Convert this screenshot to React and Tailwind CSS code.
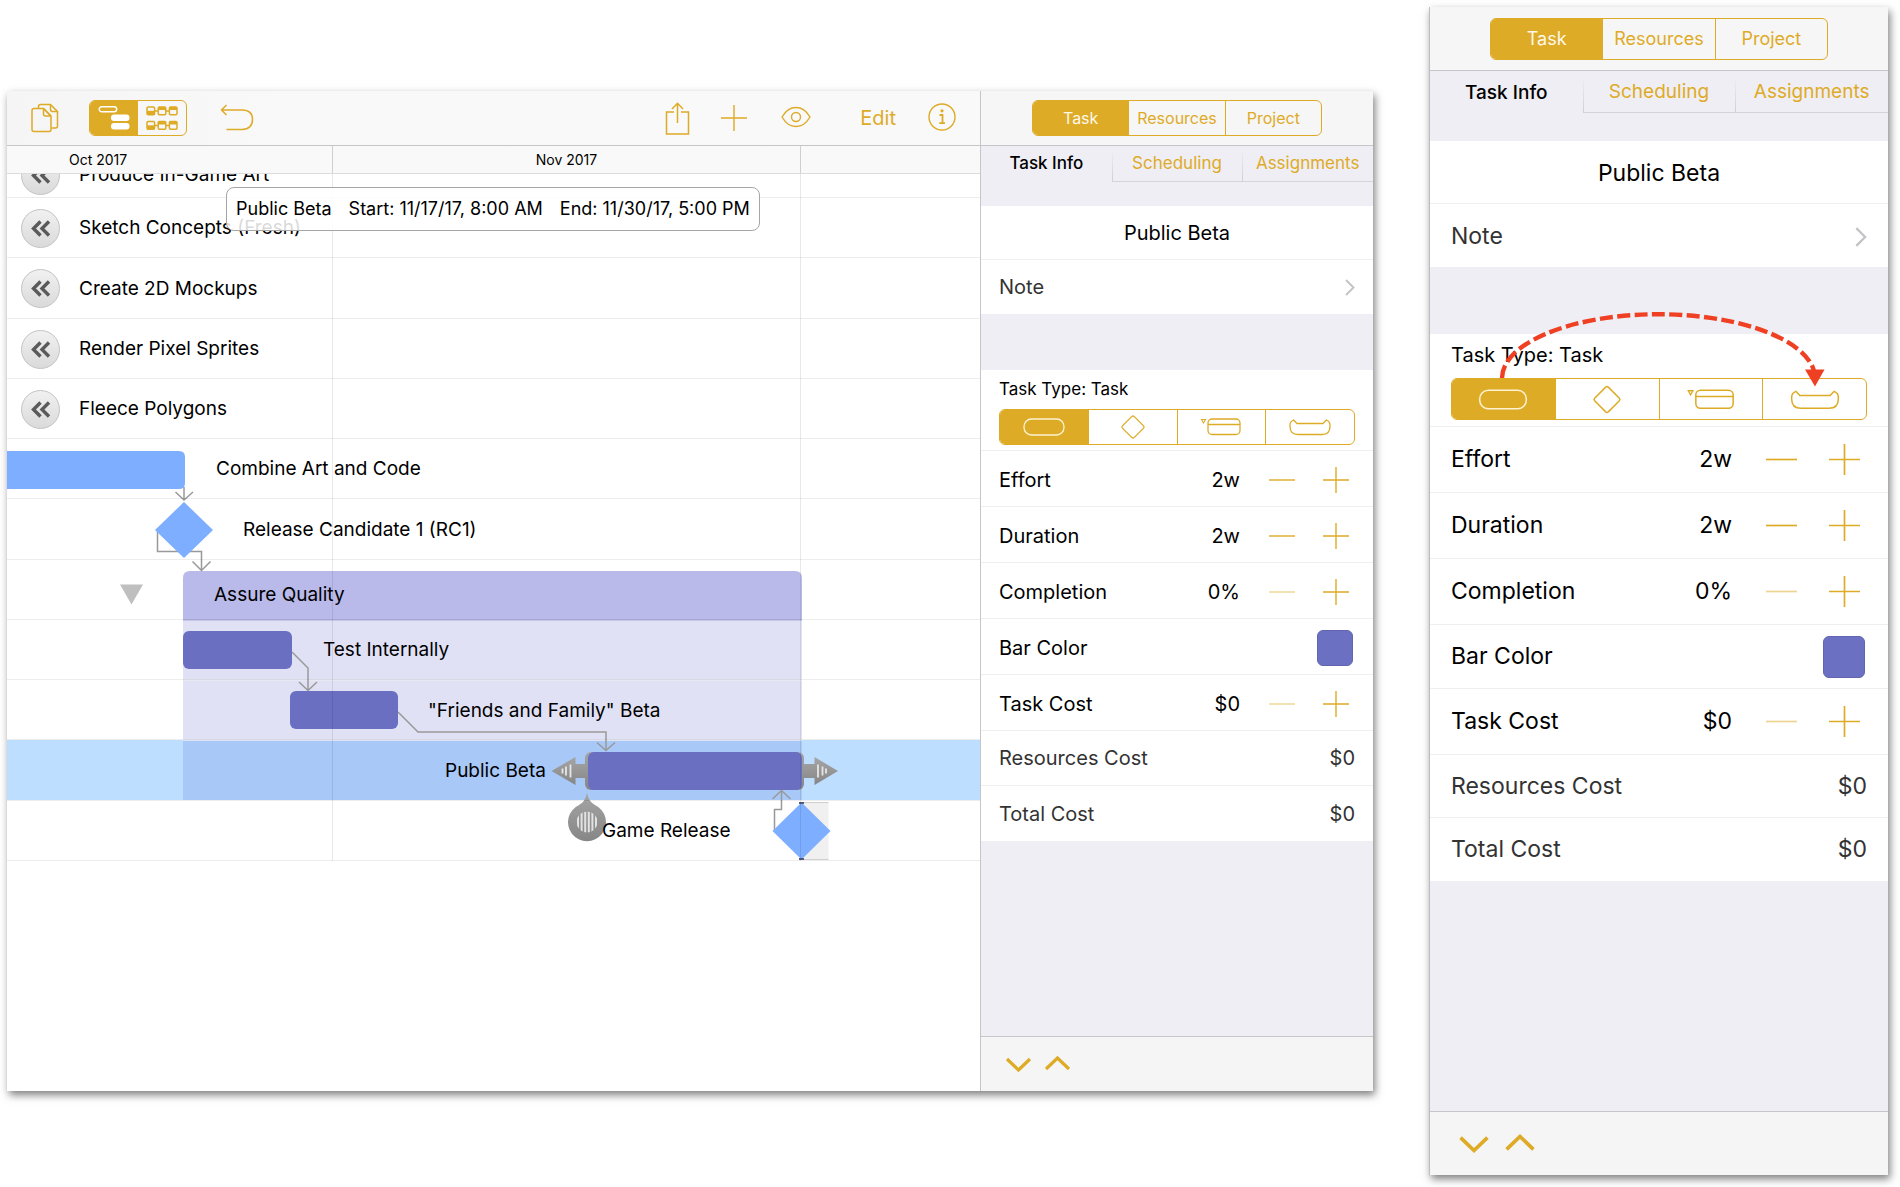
import React, { useId } from "react";

const GOLD = "#deab27";

const SMALL = {
  header: "h-[55px]",
  headerSeg: "w-[290px] h-[36px] text-base",
  tabs: "h-[36px] text-[17px]",
  tabGap: "h-[24px]",
  name: "h-[54px] text-xl",
  note: "h-[54px] pl-[18px] pr-[18px] text-xl",
  noteChevron: "w-[10px] h-[17px]",
  gap: "h-[56px]",
  type: "pt-[9px] pb-[5px] px-[18px]",
  typeLabel: "text-[17px] leading-5",
  typeSeg: "mt-[10px] h-[36px]",
  typeIcon: "w-[60px] h-[30px]",
  row: "h-[56px] pt-0.5 pl-[18px] pr-[24px] text-xl",
  value: "w-[90px] mr-[29px]",
  step: "w-[26px] h-[26px]",
  steps: "gap-[28px]",
  colorRow: "h-[56px] pt-0.5 pl-[18px] pr-[20px] text-xl",
  swatch: "size-[36px]",
  costRow: "h-[55px] pl-[18px] pr-[18px] text-xl",
  footer: "h-[55px] pl-[24px] gap-[12px]",
  chevron: "w-[27px] h-[18px]",
};

const LARGE = {
  header: "h-[64px]",
  headerSeg: "w-[338px] h-[42px] text-lg",
  tabs: "h-[42px] pt-0.5 text-[19px]",
  tabGap: "h-[28px]",
  name: "h-[63px] pt-0.5 text-[23px]",
  note: "h-[63px] pt-0.5 pl-[21px] pr-[21px] text-[23px]",
  noteChevron: "w-[12px] h-[20px]",
  gap: "h-[67px]",
  type: "pt-[9px] pb-[6px] px-[21px]",
  typeLabel: "text-xl leading-6",
  typeSeg: "mt-[11px] h-[42px]",
  typeIcon: "w-[70px] h-[35px]",
  row: "h-[66px] pl-[21px] pr-[28px] text-[23px]",
  value: "w-[100px] mr-[34px]",
  step: "w-[31px] h-[31px]",
  steps: "gap-[32px]",
  colorRow: "h-[64px] pl-[21px] pr-[23px] text-[23px]",
  swatch: "size-[42px]",
  costRow: "h-[63px] pl-[21px] pr-[21px] text-[23px]",
  footer: "h-[64px] pl-[28px] gap-[14px]",
  chevron: "w-[32px] h-[21px]",
};

function StepIcon({ plus, className }) {
  return (
    <svg viewBox="0 0 26 26" className={className} fill="none" stroke={GOLD} strokeWidth="1.4" aria-hidden="true">
      <path d={plus ? "M0 13H26M13 0V26" : "M0 13H26"} />
    </svg>
  );
}

function TypeIcon({ kind, className }) {
  const paths = {
    task: <rect x="10" y="7" width="40" height="16" rx="7.5" />,
    milestone: <path d="M28.9 4.4 L19.4 13.9 Q18.4 15 19.4 16.1 L28.9 25.6 Q30 26.6 31.1 25.6 L40.6 16.1 Q41.6 15 40.6 13.9 L31.1 4.4 Q30 3.4 28.9 4.4Z" />,
    group: (
      <>
        <rect x="17" y="7" width="32" height="15.5" rx="4" />
        <path d="M17 12.5H49" />
        <path d="M10.5 7.5H14.5L12.5 11Z" strokeWidth="1.1" />
      </>
    ),
    hammock: <path d="M10 13 Q10 9.5 13.6 8 L17 11.5 H43 L46.4 8 Q50 9.5 50 13 V14.5 Q50 22.5 42 22.5 H18 Q10 22.5 10 14.5Z" strokeLinejoin="round" />,
  };
  return (
    <svg viewBox="0 0 60 30" className={className} fill="none" stroke="currentColor" strokeWidth="1.3" aria-hidden="true">
      {paths[kind]}
    </svg>
  );
}

function StepRow({ s, label, value, minusOff }) {
  const id = useId();
  return (
    <div className={"flex items-center border-b border-[#efeff1] " + s.row}>
      <label htmlFor={id} className="flex-1 text-black">{label}</label>
      <input id={id} defaultValue={value} className={"bg-transparent text-right text-black outline-none " + s.value} />
      <div className={"flex items-center " + s.steps}>
        <button type="button" disabled={minusOff} aria-label={"Decrease " + label} className="disabled:opacity-50">
          <StepIcon className={s.step} />
        </button>
        <button type="button" aria-label={"Increase " + label}>
          <StepIcon plus className={s.step} />
        </button>
      </div>
    </div>
  );
}

function Inspector({ s, children }) {
  const seg = "flex-1 border-l border-[#deab27] first:border-l-0";
  const tab =
    "relative border-b border-[#d3d3d8] text-[#deab27] before:absolute before:left-0 before:top-1 before:bottom-0 before:w-px before:bg-gradient-to-b before:from-transparent before:to-[#cfcfd4]";
  return (
    <div className="flex h-full flex-col bg-[#efeef4]">
      <div className={"flex items-center justify-center border-b border-[#c6c6ca] bg-[#f6f6f6] " + s.header}>
        <div className={"flex overflow-hidden rounded-md border border-[#deab27] text-[#deab27] " + s.headerSeg}>
          <button type="button" aria-pressed="true" className={seg + " bg-[#deab27] text-[#fdf8ea]"}>Task</button>
          <button type="button" className={seg}>Resources</button>
          <button type="button" className={seg}>Project</button>
        </div>
      </div>
      <div role="tablist" className={"grid grid-cols-3 " + s.tabs}>
        <button type="button" role="tab" aria-selected="true" className="font-medium text-black">Task Info</button>
        <button type="button" role="tab" aria-selected="false" className={tab}>Scheduling</button>
        <button type="button" role="tab" aria-selected="false" className={tab}>Assignments</button>
      </div>
      <div className={s.tabGap} />
      <div className="bg-white">
        <input aria-label="Task name" defaultValue="Public Beta" className={"block w-full border-b border-[#efeff1] bg-transparent text-center text-black outline-none " + s.name} />
        <button type="button" className={"flex w-full items-center justify-between text-[#333] " + s.note}>
          Note
          <svg viewBox="0 0 10 17" className={s.noteChevron} fill="none" stroke="#c4c4c8" strokeWidth="2" aria-hidden="true">
            <path d="M1 1L8.500 8.500L1 16" />
          </svg>
        </button>
      </div>
      <div className={s.gap} />
      <div className="bg-white">
        <div className={"relative border-b border-[#efeff1] " + s.type}>
          <div className={"text-black " + s.typeLabel}>Task Type: Task</div>
          <div className={"flex overflow-hidden rounded-md border border-[#deab27] text-[#deab27] " + s.typeSeg}>
            {["task", "milestone", "group", "hammock"].map((kind, i) => (
              <button
                key={kind}
                type="button"
                aria-label={kind}
                aria-pressed={i === 0}
                className={"flex items-center justify-center aria-pressed:bg-[#deab27] aria-pressed:text-[#fdf3d4] " + seg}
              >
                <TypeIcon kind={kind} className={s.typeIcon} />
              </button>
            ))}
          </div>
          {children}
        </div>
        <StepRow s={s} label="Effort" value="2w" />
        <StepRow s={s} label="Duration" value="2w" />
        <StepRow s={s} label="Completion" value="0%" minusOff />
        <div className={"flex items-center justify-between border-b border-[#efeff1] text-black " + s.colorRow}>
          Bar Color
          <button type="button" aria-label="Bar color" className={"rounded-md border border-[#6165ad] bg-[#6c70c2] " + s.swatch} />
        </div>
        <StepRow s={s} label="Task Cost" value="$0" minusOff />
        <div className={"flex items-center justify-between border-b border-[#efeff1] text-[#333] " + s.costRow}>
          <span>Resources Cost</span>
          <span>$0</span>
        </div>
        <div className={"flex items-center justify-between text-[#333] " + s.costRow}>
          <span>Total Cost</span>
          <span>$0</span>
        </div>
      </div>
      <div className="flex-1" />
      <div className={"flex items-center border-t border-[#c6c6ca] bg-[#f5f5f5] " + s.footer}>
        <button type="button" aria-label="Next task">
          <svg viewBox="0 0 27 18" className={s.chevron} fill="none" stroke={GOLD} strokeWidth="3.2" aria-hidden="true">
            <path d="M2 4L13.500 15L25 4" />
          </svg>
        </button>
        <button type="button" aria-label="Previous task">
          <svg viewBox="0 0 27 18" className={s.chevron} fill="none" stroke={GOLD} strokeWidth="3.2" aria-hidden="true">
            <path d="M2 14L13.500 3L25 14" />
          </svg>
        </button>
      </div>
    </div>
  );
}

function Toolbar() {
  return (
    <div className="flex h-[55px] items-center border-b border-[#c6c6ca] bg-gradient-to-r from-[#f5f5f5] to-[#f9f9f9] to-30% pr-[24px] pl-[24px]">
      <button type="button" aria-label="Documents">
        <svg viewBox="0 0 28 30" className="h-[30px] w-[28px]" fill="none" stroke={GOLD} strokeWidth="1.5" strokeLinejoin="round" aria-hidden="true">
          <path d="M7.500 5V3.500Q7.500 1.500 9.500 1.500H19.500L26.500 8.500V23Q26.500 25 24.500 25H20.500" />
          <path d="M19.500 1.500V6.500Q19.500 8.500 21.500 8.500H26.500" />
          <path d="M3 5.500H12.500L20 13V26.500Q20 28.500 18 28.500H3Q1 28.500 1 26.500V7.500Q1 5.500 3 5.500Z" />
          <path d="M12.500 5.500V11Q12.500 13 14.500 13H20M12.500 5.500L20 13" />
        </svg>
      </button>
      <div className="ml-[30px] flex h-[36px] w-[98px] overflow-hidden rounded-md border border-[#deab27]">
        <button type="button" aria-label="Gantt view" aria-pressed="true" className="flex flex-1 items-center justify-center bg-[#deab27]">
          <svg viewBox="0 0 32 26" className="h-[26px] w-[32px]" aria-hidden="true">
            <rect x="1.200" y="1.700" width="17.500" height="5" rx="2.500" fill="none" stroke="#fff" strokeWidth="1.400" />
            <rect x="13" y="9.500" width="18.500" height="6.500" rx="3" fill="#fff" />
            <rect x="13" y="18" width="18.500" height="6.500" rx="3" fill="#fff" />
          </svg>
        </button>
        <button type="button" aria-label="Network view" className="flex flex-1 items-center justify-center">
          <svg viewBox="0 0 32 26" className="h-[26px] w-[32px]" fill="none" stroke={GOLD} aria-hidden="true">
            {[2, 16.5].map((y) => (
              <g key={y}>
                <path d={`M8 ${y + 4}H24`} strokeWidth="1.500" />
                {[1, 12.2, 23.4].map((x, i) => (
                  <g key={x}>
                    <rect x={x} y={y} width="7.600" height="7.800" rx="1.200" strokeWidth="1.500" fill="#f7f7f7" />
                    <rect x={x} y={i === 0 ? y + 3.8 : y} width="7.600" height={i === 0 ? 4 : 3} fill={GOLD} stroke="none" />
                  </g>
                ))}
              </g>
            ))}
          </svg>
        </button>
      </div>
      <button type="button" aria-label="Undo" className="ml-[33px]">
        <svg viewBox="0 0 34 28" className="h-[28px] w-[34px]" fill="none" stroke={GOLD} strokeWidth="1.500" aria-hidden="true">
          <path d="M6.500 1L1.500 6L6.500 11M1.500 6H22Q32.500 6 32.500 15.500T22 25.500H6.500" />
        </svg>
      </button>
      <div className="flex-1" />
      <button type="button" aria-label="Share">
        <svg viewBox="0 0 25 34" className="h-[34px] w-[25px]" fill="none" stroke={GOLD} strokeWidth="1.500" aria-hidden="true">
          <path d="M9 11H1.500V33H23.500V11H16M12.500 22V2.500M7 8L12.500 2.300L18 8" />
        </svg>
      </button>
      <button type="button" aria-label="Add" className="ml-[31px]">
        <StepIcon plus className="size-[26px]" />
      </button>
      <button type="button" aria-label="View options" className="ml-[34px]">
        <svg viewBox="0 0 30 22" className="mb-[2px] h-[22px] w-[30px]" fill="none" stroke={GOLD} strokeWidth="1.400" aria-hidden="true">
          <path d="M1 11Q6.500 1.500 15 1.500T29 11Q23.500 20.500 15 20.500T1 11Z" />
          <circle cx="15" cy="11" r="4.500" />
        </svg>
      </button>
      <button type="button" className="ml-[49px] text-xl text-[#deab27]">Edit</button>
      <button type="button" aria-label="Info" className="ml-[32px]">
        <svg viewBox="0 0 28 28" className="mb-[2px] size-[28px]" fill="none" stroke={GOLD} strokeWidth="1.400" aria-hidden="true">
          <circle cx="14" cy="14" r="13" />
          <circle cx="14" cy="7.800" r="1.600" fill={GOLD} stroke="none" />
          <path d="M11.500 12H14.500V20M11.300 20.200H17" strokeWidth="1.800" />
        </svg>
      </button>
    </div>
  );
}

function OffscreenTask({ children }) {
  return (
    <div className="flex items-center pt-0.5">
      <button
        type="button"
        aria-label={"Scroll to " + children}
        className="ml-[14px] flex size-[39px] shrink-0 items-center justify-center rounded-full border border-[#c3c3c3] bg-gradient-to-b from-[#f1f1f1] to-[#dadada]"
      >
        <svg viewBox="0 0 20 17" className="h-[17px] w-[20px]" fill="none" stroke="#5a5a5a" strokeWidth="3.400" aria-hidden="true">
          <path d="M9.500 1.500L2.500 8.500L9.500 15.500M18 1.500L11 8.500L18 15.500" />
        </svg>
      </button>
      <span className="ml-[19px]">{children}</span>
    </div>
  );
}

function Chart() {
  return (
    <svg className="absolute inset-0 h-full w-full" aria-hidden="true">
      <defs>
        <linearGradient id="handle" x1="0" y1="0" x2="0" y2="1">
          <stop offset="0" stopColor="#a5a5a5" />
          <stop offset="1" stopColor="#868686" />
        </linearGradient>
        <clipPath id="grip"><circle cx="580" cy="648" r="10.500" /></clipPath>
      </defs>
      <rect y="566" width="100%" height="60" fill="#bddefe" />
      <path d="M176 446V404Q176 397 183 397H788Q795 397 795 404V446Z" fill="#b9baea" />
      <rect x="176" y="446" width="619" height="120" fill="#e1e1f5" />
      <rect x="176" y="566" width="619" height="60" fill="#a8c8f7" />
      <path d="M176 506H795M176 566H795" stroke="#ececf3" strokeWidth="1.500" />
      <path d="M176 446H795" stroke="#acadda" />
      <path d="M113 410.500H136L124.500 430.500Z" fill="#bfbfbf" />
      <rect x="794" y="628" width="27.500" height="58" fill="#f0f0f0" />
      <path d="M794 628.500H821.500M794 685.500H821.500" stroke="#cfcfcf" />

      <g fill="none" stroke="#999" strokeWidth="1.500">
        <path d="M177 313V326M168.500 318L177 326L186 318" />
        <path d="M150.500 357V377.500H194.500V397M185.500 387.500L194.500 396.500L203.500 387.500" />
        <path d="M285 478L301 494V517M292 508L301 516.500L310 508" />
        <path d="M391 538L411 558H599V577M590 568.500L599 576.500L608 568.500" />
        <path d="M767.500 656V635.500H774.500V617M765.500 625L774.500 616.500L783.500 625" />
      </g>

      <path d="M0 277H172Q178 277 178 283V309Q178 315 172 315H0Z" fill="#7daeff" />
      <path d="M177 328L206 356L177 384L148 356Z" fill="#7daeff" />
      <path d="M794.500 628.500L823.500 657L794.500 685.500L765.500 657Z" fill="#7daeff" />
      <path d="M792 629H797M792 685H797" stroke="#4f5c80" strokeWidth="2" />
      <rect x="176" y="457" width="109" height="38" rx="6" fill="#6b6fc2" />
      <rect x="283" y="517" width="108" height="38" rx="6" fill="#6b6fc2" />

      <g fill="url(#handle)">
        <rect x="578" y="578" width="219" height="38" rx="6" />
        <path d="M544.500 597L568.500 583V590H579V604H568.500V611Z" />
        <path d="M831 597L807.500 583V590H796V604H807.500V611Z" />
        <path d="M580 619Q582 628 588 631A19 19 0 1 1 572 631Q578 628 580 619Z" />
      </g>
      <rect x="581" y="578" width="214" height="38" rx="6" fill="#6b6fc2" />
      <path d="M555.500 594.500V599.500M559 592.500V601.500M563.500 590.500V603.500M811 590.500V603.500M815.500 592.500V601.500M819 594.500V599.500" stroke="#e6e6e6" strokeWidth="1.800" />
      <g clipPath="url(#grip)">
        <path d="M571 637V659M574.600 637V659M578.200 637V659M581.800 637V659M585.400 637V659M589 637V659" stroke="#e2e2e2" strokeWidth="2" />
      </g>
      <path d="M325.500 0V687M793.500 0V687" stroke="#000" strokeOpacity="0.09" />
    </svg>
  );
}

function Gantt() {
  return (
    <div className="min-w-0 flex-1 bg-white">
      <Toolbar />
      <div className="flex h-[28px] border-b border-[#dcdcdc] bg-[#f9f9f9] text-sm text-black">
        <div className="flex w-[326px] items-center border-r border-[#cfcfcf] pl-[62px]">Oct 2017</div>
        <div className="flex w-[468px] items-center justify-center border-r border-[#cfcfcf]">Nov 2017</div>
      </div>
      <div className="relative">
        <Chart />
        <div className="relative grid h-[687px] grid-rows-[24px_repeat(11,1fr)] text-[19px] text-black *:border-b *:border-black/7">
          <div className="flex items-end overflow-hidden">
            <div className="mb-[2px]">
              <OffscreenTask>Produce In-Game Art</OffscreenTask>
            </div>
          </div>
          <OffscreenTask>Sketch Concepts (Fresh)</OffscreenTask>
          <OffscreenTask>Create 2D Mockups</OffscreenTask>
          <OffscreenTask>Render Pixel Sprites</OffscreenTask>
          <OffscreenTask>Fleece Polygons</OffscreenTask>
          <div className="flex items-center pt-0.5 pl-[209px]">Combine Art and Code</div>
          <div className="flex items-center pt-0.5 pl-[236px]">Release Candidate 1 (RC1)</div>
          <div className="flex items-center pt-3 pl-[207px]">Assure Quality</div>
          <div className="flex items-center pt-0.5 pl-[316px]">Test Internally</div>
          <div className="flex items-center pt-0.5 pl-[421px]">"Friends and Family" Beta</div>
          <div className="flex items-center pt-0.5 pl-[438px]">Public Beta</div>
          <div className="flex items-center pt-0.5 pl-[595px]">Game Release</div>
        </div>
        <div role="tooltip" className="absolute top-[13px] left-[219px] flex h-[44px] items-center gap-[17px] rounded-lg border border-[#a6a6a6] bg-white/85 px-[9px] text-lg whitespace-nowrap text-black">
          <span>Public Beta</span>
          <span>Start: 11/17/17, 8:00 AM</span>
          <span>End: 11/30/17, 5:00 PM</span>
        </div>
      </div>
    </div>
  );
}

export default function App() {
  return (
    <main className="flex items-start gap-[56px] bg-white pt-[7px] pr-[12px] pb-3 pl-[7px] font-['Inter',sans-serif]">
      <section className="mt-[84px] flex min-h-[1000px] min-w-0 flex-1 shadow-[2px_4px_8px_rgba(0,0,0,0.5)]">
        <Gantt />
        <aside className="w-[393px] shrink-0 border-l border-[#c6c6ca]">
          <Inspector s={SMALL} />
        </aside>
      </section>
      <aside className="flex min-h-[1168px] w-[459px] shrink-0 flex-col border-l border-[#bdbdbd] shadow-[2px_4px_8px_rgba(0,0,0,0.5)] *:flex-1">
        <Inspector s={LARGE}>
          <svg viewBox="0 0 458 90" className="pointer-events-none absolute -top-[30px] left-0 h-[90px] w-[458px]" aria-hidden="true">
            <path d="M72 74A156.500 64 0 0 1 384 67" fill="none" stroke="#f04023" strokeWidth="4.400" strokeDasharray="13 4.400" />
            <path d="M375 65.500H394.500L385 82.500Z" fill="#f04023" />
          </svg>
        </Inspector>
      </aside>
    </main>
  );
}
